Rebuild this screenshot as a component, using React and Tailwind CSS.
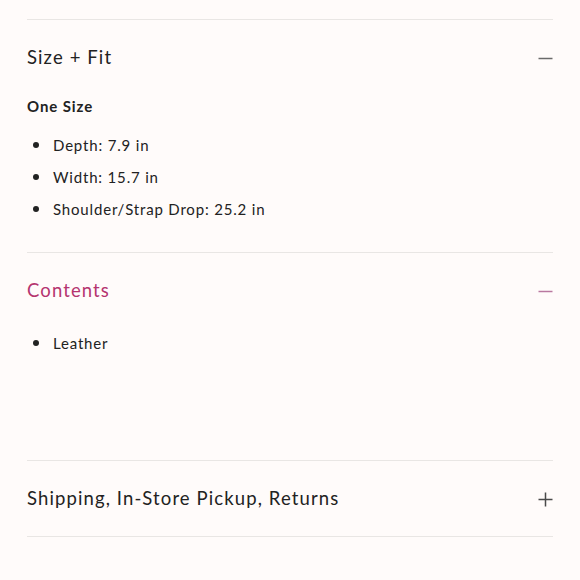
import React, { useState } from 'react';

const sections = [
  {
    id: 'size',
    title: 'Size + Fit',
    subtitle: 'One Size',
    items: ['Depth: 7.9 in', 'Width: 15.7 in', 'Shoulder/Strap Drop: 25.2 in'],
  },
  {
    id: 'contents',
    title: 'Contents',
    items: ['Leather'],
  },
  {
    id: 'shipping',
    title: 'Shipping, In-Store Pickup, Returns',
    items: [],
  },
];

const Minus = ({ color }) => (
  <svg width="15" height="15" viewBox="0 0 15 15">
    <path d="M0.5 7.5H14.5" stroke={color} strokeWidth="1.5" />
  </svg>
);

const PlusIcon = () => (
  <svg width="15" height="15" viewBox="0 0 15 15">
    <path d="M0.5 7.5H14.5M7.5 0.5V14.5" stroke="#4a4a4a" strokeWidth="1.5" />
  </svg>
);

const App = () => {
  const [open, setOpen] = useState({ size: true, contents: true, shipping: false });
  const active = 'contents';

  return (
    <div className="min-h-[580px] bg-[#fffbfa] px-[27px] pt-[19px] font-['Lato','Liberation_Sans',sans-serif] text-[#222]">
      {sections.map((s) => {
        const isOpen = open[s.id];
        const isActive = s.id === active;
        return (
          <div key={s.id} className="border-t border-[#e9e6e4] last:border-b">
            <button
              onClick={() => setOpen({ ...open, [s.id]: !isOpen })}
              className={`flex h-[75px] w-full items-center justify-between pt-[1px] text-left text-[18.5px] tracking-[0.06em] ${isActive ? 'text-[#b5346f]' : 'text-[#222]'}`}
            >
              <span>{s.title}</span>
              {isOpen ? <Minus color={isActive ? '#b978a0' : '#6a6a6a'} /> : <PlusIcon />}
            </button>
            {isOpen && (
              <div className={s.id === 'contents' ? 'pb-[101px]' : 'pb-[27px]'}>
                {s.subtitle && (
                  <div className="mb-[12px] text-[15px] leading-[22px] font-bold tracking-[0.06em]">{s.subtitle}</div>
                )}
                <ul className={s.subtitle ? '' : '-mt-[1px]'}>
                  {s.items.map((item) => (
                    <li key={item} className="flex items-center text-[15px] leading-[32px] tracking-[0.055em]">
                      <span className="ml-[6px] mr-[14px] h-[6px] w-[6px] rounded-full bg-[#222]" />
                      {item}
                    </li>
                  ))}
                </ul>
              </div>
            )}
          </div>
        );
      })}
    </div>
  );
};

export default App;
